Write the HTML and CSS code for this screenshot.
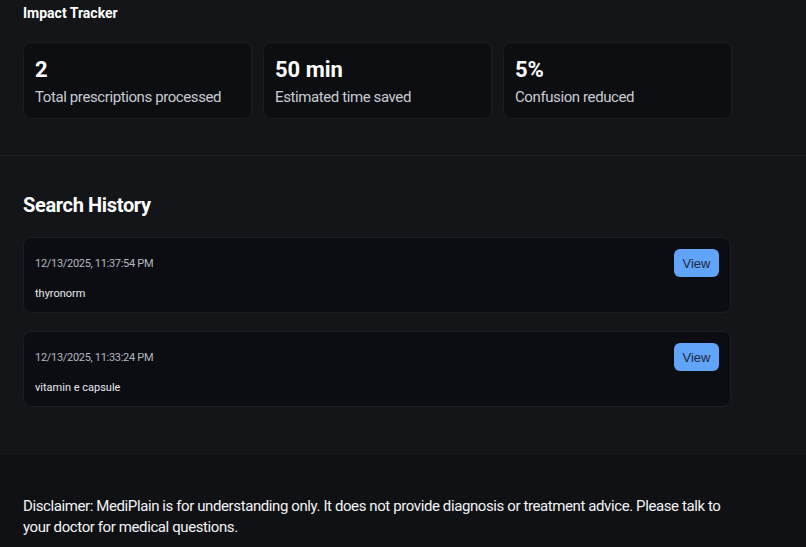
FILE: index.html
```html
<!DOCTYPE html>
<html>
<head>
<meta charset="utf-8">
<link rel="stylesheet" href="styles.css">
</head>
<body>
<section class="impact">
  <h3 class="impact-title">Impact Tracker</h3>
  <div class="stats">
    <div class="stat"><div class="stat-num">2</div><div class="stat-label">Total prescriptions processed</div></div>
    <div class="stat"><div class="stat-num">50 min</div><div class="stat-label">Estimated time saved</div></div>
    <div class="stat"><div class="stat-num">5%</div><div class="stat-label">Confusion reduced</div></div>
  </div>
</section>
<section class="history">
  <h2 class="history-title">Search History</h2>
  <div class="items">
    <div class="item">
      <div class="item-head"><span class="item-date">12/13/2025, 11:37:54 PM</span><button class="view-btn">View</button></div>
      <div class="item-name">thyronorm</div>
    </div>
    <div class="item">
      <div class="item-head"><span class="item-date">12/13/2025, 11:33:24 PM</span><button class="view-btn">View</button></div>
      <div class="item-name">vitamin e capsule</div>
    </div>
  </div>
</section>
<footer class="footer">
  <p class="disclaimer">Disclaimer: MediPlain is for understanding only. It does not provide diagnosis or treatment advice. Please talk to your doctor for medical questions.</p>
</footer>
</body>
</html>
```
FILE: styles.css
```css
html, body {
  margin: 0;
  padding: 0;
  background: #131519;
  color: #f3f4f6;
  font-family: Roboto, "Noto Sans", sans-serif;
}
.impact {
  padding: 3px 23px 36px;
}
.impact-title {
  margin: 0;
  font-size: 14px;
  line-height: 20px;
  font-weight: 700;
  color: #ffffff;
}
.stats {
  margin-top: 19px;
  display: grid;
  grid-template-columns: repeat(3, 229px);
  gap: 11px;
}
.stat {
  background: #0c0e12;
  border: 1px solid #1a1d22;
  border-radius: 8px;
  padding: 13px 11px 10px;
  height: 77px;
  box-sizing: border-box;
}
.stat-num {
  font-size: 22px;
  line-height: 28px;
  font-weight: 700;
  color: #ffffff;
}
.stat-label {
  margin-top: 2px;
  font-size: 15px;
  line-height: 22px;
  letter-spacing: -0.4px;
  color: #c9ccd2;
}
.history {
  border-top: 1px solid #1b1e23;
  padding: 35px 23px 46px;
}
.history-title {
  margin: 0;
  font-size: 20px;
  line-height: 28px;
  font-weight: 700;
  letter-spacing: -0.35px;
  color: #ffffff;
}
.items {
  margin-top: 18px;
  width: 708px;
  display: flex;
  flex-direction: column;
  gap: 18px;
}
.item {
  background: #0b0d12;
  border: 1px solid #1a1d22;
  border-radius: 8px;
  padding: 11px;
  height: 76px;
  box-sizing: border-box;
}
.item-head {
  display: flex;
  align-items: center;
  justify-content: space-between;
  height: 28px;
}
.item-date {
  font-size: 11px;
  letter-spacing: -0.3px;
  color: #b4b8c0;
  padding-top: 1px;
}
.item-name {
  margin-top: 9px;
  font-size: 11px;
  line-height: 16px;
  color: #e8eaee;
}
.view-btn {
  width: 45px;
  height: 28px;
  border: none;
  border-radius: 6px;
  background: #60a5fa;
  color: #1e293b;
  font-family: "Liberation Sans", Arial, sans-serif;
  font-size: 13px;
  padding: 0;
}
.footer {
  background: #0f1114;
  border-top: 1px solid #1a1d22;
  padding: 42px 23px 20px;
}
.disclaimer {
  margin: 0;
  max-width: 708px;
  font-size: 15px;
  line-height: 21px;
  letter-spacing: -0.4px;
  color: #f3f4f6;
}
```
